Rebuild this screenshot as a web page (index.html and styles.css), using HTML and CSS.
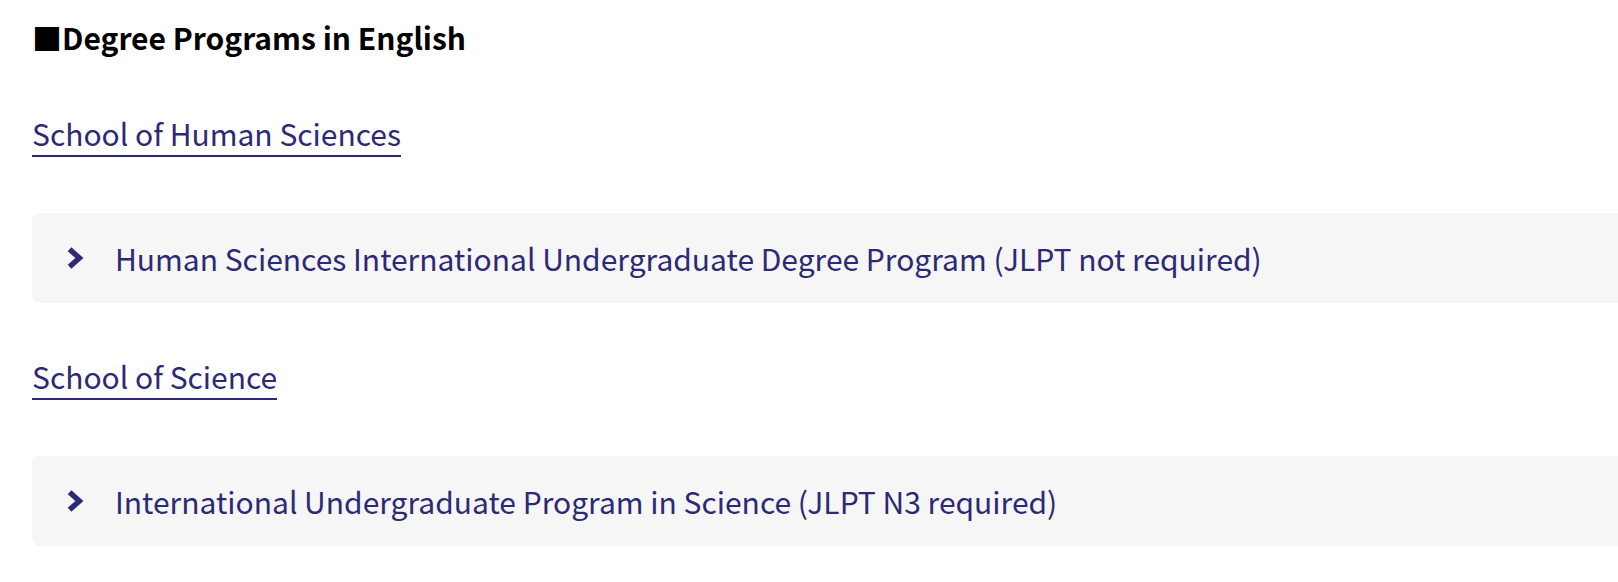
FILE: index.html
```html
<!DOCTYPE html>
<html lang="en">
<head>
<meta charset="utf-8">
<title>Degree Programs in English</title>
<link rel="stylesheet" href="styles.css">
</head>
<body>
<main class="page">
  <h2 class="heading">■Degree Programs in English</h2>

  <section class="school">
    <p class="school-title"><a class="school-link" href="#">School of Human Sciences</a></p>
    <div class="program">
      <svg class="chevron" viewBox="0 0 16 22" aria-hidden="true"><path d="M3 3 L12 11 L3 19" fill="none" stroke="currentColor" stroke-width="5"/></svg>
      <span class="program-name">Human Sciences International Undergraduate Degree Program (JLPT not required)</span>
    </div>
  </section>

  <section class="school">
    <p class="school-title"><a class="school-link" href="#">School of Science</a></p>
    <div class="program">
      <svg class="chevron" viewBox="0 0 16 22" aria-hidden="true"><path d="M3 3 L12 11 L3 19" fill="none" stroke="currentColor" stroke-width="5"/></svg>
      <span class="program-name">International Undergraduate Program in Science (JLPT N3 required)</span>
    </div>
  </section>
</main>
</body>
</html>
```

FILE: styles.css
```css
html, body {
  margin: 0;
  padding: 0;
  background: #ffffff;
  overflow: hidden;
}

body {
  font-family: "Noto Sans CJK JP", "Noto Sans", sans-serif;
  color: #2c2a78;
}

.page {
  padding: 15px 0 0 32px;
  display: flex;
  flex-direction: column;
  gap: 51px;
}

.heading {
  margin: 0;
  font-size: 30px;
  line-height: 45px;
  font-weight: 700;
  color: #000000;
}

.school {
  display: flex;
  flex-direction: column;
  gap: 57px;
}

.school-title {
  margin: 0;
  font-size: 30px;
  line-height: 45px;
}

.school-link {
  color: #2c2a78;
  text-decoration: none;
  border-bottom: 2px solid #2c2a78;
}

.program {
  display: flex;
  align-items: center;
  gap: 31px;
  height: 90px;
  padding-left: 34px;
  background: #f6f6f6;
  border-radius: 8px 0 0 8px;
  font-size: 30px;
}

.chevron {
  width: 18px;
  height: 24px;
  color: #2c2a78;
  flex: none;
}

.program-name {
  line-height: 45px;
}
```
